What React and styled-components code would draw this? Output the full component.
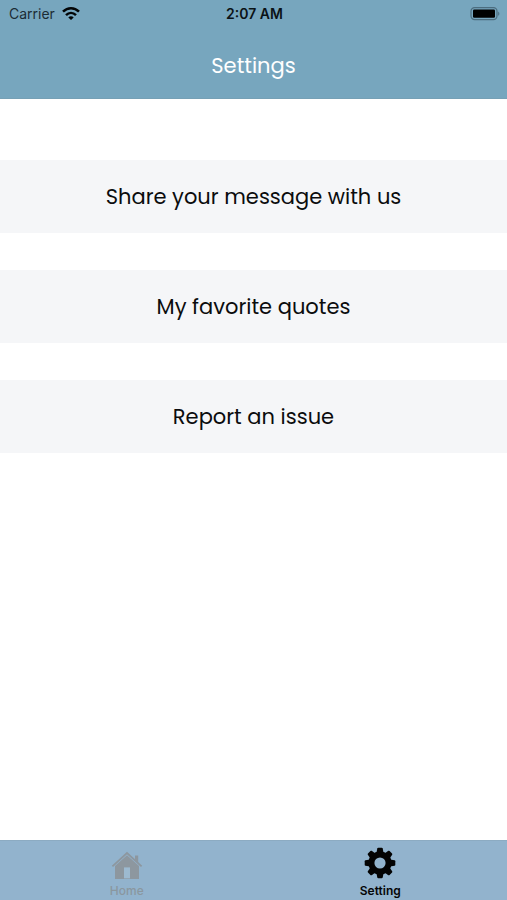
import React from "react";
import styled, { createGlobalStyle } from "styled-components";

const GlobalStyle = createGlobalStyle`
  *, *::before, *::after { box-sizing: border-box; }
  body { margin: 0; background: #ffffff; }
`;

const Screen = styled.div`
  min-height: 100vh;
  display: flex;
  flex-direction: column;
  background: #ffffff;
  color: #0b0c0d;
  font-family: Poppins, Inter, "Open Sans", sans-serif;
`;

const Header = styled.header`
  background: #77a6be;
  border-bottom: 1px solid #76a0b5;
`;

const StatusBar = styled.div`
  display: grid;
  grid-template-columns: 1fr auto 1fr;
  align-items: center;
  height: 28px;
  padding: 0 7px 0 9px;
  color: #0b1216;
  font-family: Inter, sans-serif;
  font-size: 14px;
  line-height: 20px;
`;

const Carrier = styled.span`
  display: flex;
  align-items: center;
  gap: 7px;
  color: #1c2c35;
`;

const Clock = styled.time`
  font-weight: 600;
`;

const BatterySlot = styled.span`
  display: flex;
  justify-content: flex-end;
`;

const Title = styled.h1`
  margin: 0;
  padding: 23px 0 17px;
  color: #ffffff;
  font-size: 21px;
  font-weight: 400;
  line-height: 30px;
  text-align: center;
`;

const Options = styled.main`
  flex: 1;
  display: flex;
  flex-direction: column;
  gap: 37px;
  padding: 61px 0;
`;

const OptionButton = styled.button`
  width: 100%;
  padding: 20px 16px;
  border: 0;
  background: #f5f6f8;
  color: inherit;
  font-family: inherit;
  font-size: 21px;
  line-height: 33px;
  text-align: center;
  cursor: pointer;
`;

const TabBar = styled.nav`
  display: grid;
  grid-template-columns: 1fr 1fr;
  background: #92b3cd;
  border-top: 1px solid #8cabc2;
`;

const Tab = styled.a`
  display: flex;
  flex-direction: column;
  align-items: center;
  gap: 4px;
  padding: 6px 0 1px;
  color: ${({ $active }) => ($active ? "#050607" : "#8a979f")};
  font-family: Inter, sans-serif;
  font-size: 12px;
  font-weight: ${({ $active }) => ($active ? 600 : 500)};
  line-height: 16px;
  text-decoration: none;
`;

function WifiIcon() {
  return (
    <svg width="18" height="14" viewBox="0 0 18 14" fill="none" stroke="#030506" strokeWidth="2.5" aria-hidden="true">
      <path d="M1 4.7C5.6.1 12.4.1 17 4.7" />
      <path d="M4 8.1c3-2.9 7-2.9 10 0" />
      <path d="M9 13.1 6.3 10.4c1.5-1.4 3.9-1.4 5.4 0Z" fill="#030506" stroke="none" />
    </svg>
  );
}

function BatteryIcon() {
  return (
    <svg width="30" height="14" viewBox="0 0 30 14" aria-label="Battery full" role="img">
      <rect x="1" y="0.6" width="26" height="12" rx="3.6" fill="none" stroke="#4c6d7f" strokeWidth="1.2" />
      <rect x="3" y="2.4" width="22" height="8.4" rx="1.2" fill="#000000" />
      <path d="M28.2 4.4c1.6.7 1.6 3.7 0 4.4Z" fill="#4c6d7f" />
    </svg>
  );
}

function HomeIcon() {
  return (
    <svg width="32" height="32" viewBox="0 0 32 32" aria-hidden="true">
      <path d="M24 8.5h3.2v7.8L24 13.4Z" fill="#8d979f" />
      <path d="M1.4 19.4 16 6l14.6 13.4" fill="none" stroke="#8d979f" strokeWidth="1.8" />
      <path d="M16 8.2 28 19V32.4H4V19Z" fill="#8d979f" />
      <path d="M13 20.4h6v11h-6Z" fill="#9dbad0" />
    </svg>
  );
}

const TEETH = [0, 45, 90, 135, 180, 225, 270, 315];

function GearIcon() {
  return (
    <svg width="32" height="32" viewBox="0 0 32 32" aria-hidden="true">
      <circle cx="16" cy="16" r="8.6" fill="none" stroke="#030303" strokeWidth="6" />
      {TEETH.map((angle) => (
        <path
          key={angle}
          d="M12.4 6 13.3 1.5Q13.5.7 14.3.7h3.4q.8 0 1 .8L19.6 6Z"
          fill="#030303"
          transform={`rotate(${angle} 16 16)`}
        />
      ))}
    </svg>
  );
}

const OPTIONS = ["Share your message with us", "My favorite quotes", "Report an issue"];

export default function App() {
  return (
    <Screen>
      <GlobalStyle />
      <Header>
        <StatusBar>
          <Carrier>
            Carrier
            <WifiIcon />
          </Carrier>
          <Clock>2:07 AM</Clock>
          <BatterySlot>
            <BatteryIcon />
          </BatterySlot>
        </StatusBar>
        <Title>Settings</Title>
      </Header>
      <Options>
        {OPTIONS.map((label) => (
          <OptionButton key={label} type="button">
            {label}
          </OptionButton>
        ))}
      </Options>
      <TabBar>
        <Tab href="#home">
          <HomeIcon />
          Home
        </Tab>
        <Tab href="#setting" $active aria-current="page">
          <GearIcon />
          Setting
        </Tab>
      </TabBar>
    </Screen>
  );
}
